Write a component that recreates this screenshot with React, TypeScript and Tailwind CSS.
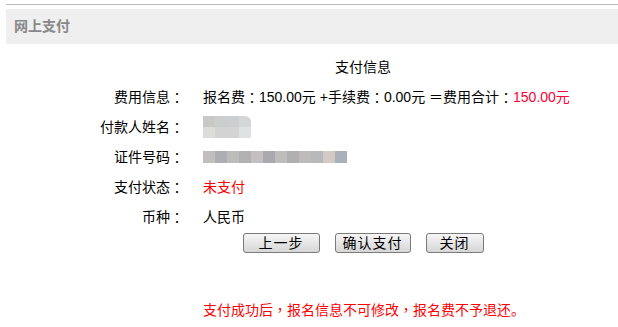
import React from 'react'

const FONT = { fontFamily: '"Liberation Sans", "Noto Sans CJK SC", sans-serif' }

const NAME_BLUR = [
  ['#c8c8c6', '#cccdcd', '#cdcecf', '#d5d6d8'],
  ['#dcdcdb', '#d3d3d3', '#d3d3d3', '#e0e1e3'],
]

const ID_BLUR = [
  '#c0bfbd', '#adaeb1', '#bcbcbb', '#b1b1b1', '#c1bfbf', '#aaaaae',
  '#bebdbb', '#b0b0b0', '#bdbcba', '#b7b9ba', '#d2cbc4', '#abb0bb',
]

// full-width punctuation sits centred in the reference, the TC face draws it that way
function P({ c }: { c: string }) {
  return <span style={{ fontFamily: '"Noto Sans CJK TC", sans-serif' }}>{c}</span>
}

function Label({ children }: { children: React.ReactNode }) {
  return <div className="flex h-[30px] items-center justify-end whitespace-nowrap">{children}</div>
}

function Value({ children }: { children: React.ReactNode }) {
  return <div className="flex h-[30px] items-center whitespace-nowrap">{children}</div>
}

function Btn({ children, w }: { children: React.ReactNode; w: string }) {
  return (
    <button
      type="button"
      className={`h-[20px] ${w} rounded-[3px] border border-[#7a7a7a] bg-gradient-to-b from-[#f6f6f6] to-[#d6d6d6] pb-[1px] text-[14px] leading-none text-black tracking-[1px]`}
    >
      {children}
    </button>
  )
}

export default function App() {
  return (
    <div className="h-[327px] w-[618px] bg-white text-[14px] text-black" style={FONT}>
      <div className="pt-[4px] pl-[6px]">
        <div className="h-px bg-[#bcbcbc]" />
        <div className="mt-[4px] flex h-[35px] items-center bg-[#efefef] pl-[8px] text-[14px] font-bold text-[#888888]">
          网上支付
        </div>
      </div>

      <div className="ml-[88px] mt-[8px] w-[550px]">
        <div className="flex h-[30px] items-center justify-center">支付信息</div>

        <div className="grid grid-cols-[96px_1fr] gap-x-[19px]">
          <Label>
            费用信息<P c="：" />
          </Label>
          <Value>
            报名费<P c="：" />
            150.00元 +手续费<P c="：" />
            0.00元 ＝费用合计<P c="：" />
            <span className="text-[#ff0033]">150.00元</span>
          </Value>

          <Label>
            付款人姓名<P c="：" />
          </Label>
          <Value>
            <div className="flex flex-col overflow-hidden rounded-tr-[6px]">
              {NAME_BLUR.map((row, i) => (
                <div key={i} className="flex">
                  {row.map((c, j) => (
                    <div key={j} className="h-[11px] w-[12px]" style={{ backgroundColor: c }} />
                  ))}
                </div>
              ))}
            </div>
          </Value>

          <Label>
            证件号码<P c="：" />
          </Label>
          <Value>
            <div className="flex">
              {ID_BLUR.map((c, i) => (
                <div key={i} className="h-[12px] w-[12px]" style={{ backgroundColor: c }} />
              ))}
            </div>
          </Value>

          <Label>
            支付状态<P c="：" />
          </Label>
          <Value>
            <span className="text-[#ff0000]">未支付</span>
          </Value>

          <Label>
            币种<P c="：" />
          </Label>
          <Value>人民币</Value>
        </div>

        <div className="mt-[1px] flex justify-center gap-[15px]">
          <Btn w="w-[77px]">上一步</Btn>
          <Btn w="w-[76px]">确认支付</Btn>
          <Btn w="w-[58px]">关闭</Btn>
        </div>

        <div className="mt-[46px] pl-[115px] text-[#ff0000]">
          支付成功后<P c="，" />
          报名信息不可修改<P c="，" />
          报名费不予退还。
        </div>
      </div>
    </div>
  )
}
